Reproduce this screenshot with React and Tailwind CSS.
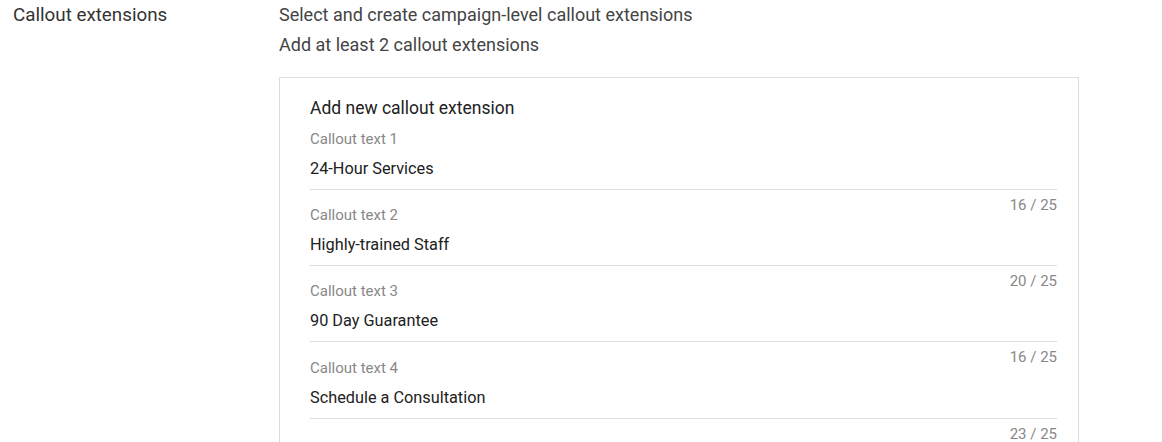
import React from 'react';

const fields = [
  { label: 'Callout text 1', value: '24-Hour Services', count: '16 / 25' },
  { label: 'Callout text 2', value: 'Highly-trained Staff', count: '20 / 25' },
  { label: 'Callout text 3', value: '90 Day Guarantee', count: '16 / 25' },
  { label: 'Callout text 4', value: 'Schedule a Consultation', count: '23 / 25' },
];

function CalloutField({ field, first }) {
  return (
    <div>
      <div className={first ? 'mt-[9px]' : 'pt-[15.2px]'}>
        <div className="text-[15px] leading-[20px] text-[#888888]">{field.label}</div>
        <div className="mt-[10px] pb-[10px] border-b border-[#dadce0] text-[16.3px] leading-[20px] text-[#212121]">
          {field.value}
        </div>
      </div>
      <div className="flex justify-end h-0">
        <div className="mt-[7px] text-[15px] leading-[16px] text-[#888888]">{field.count}</div>
      </div>
    </div>
  );
}

export default function App() {
  return (
    <div className="min-h-screen bg-white overflow-hidden h-[442px]" style={{ fontFamily: 'Roboto, "Liberation Sans", sans-serif' }}>
      <div className="flex">
        <div className="w-[279px] pl-[13px] text-[18.8px] leading-[30px] text-[#333333]">
          Callout extensions
        </div>
        <div className="flex-none">
          <p className="text-[18px] leading-[30px] text-[#444444]">Select and create campaign-level callout extensions</p>
          <p className="text-[18px] leading-[30px] text-[#444444]">Add at least 2 callout extensions</p>
          <div className="mt-[17px] w-[800px] border border-[#dadce0] pt-[18px] pl-[30px] pr-[21px] pb-[40px]">
            <h2 className="text-[17.5px] leading-[24px] text-[#212121]">Add new callout extension</h2>
            {fields.map((f, i) => (
              <CalloutField key={f.label} field={f} first={i === 0} />
            ))}
          </div>
        </div>
      </div>
    </div>
  );
}
